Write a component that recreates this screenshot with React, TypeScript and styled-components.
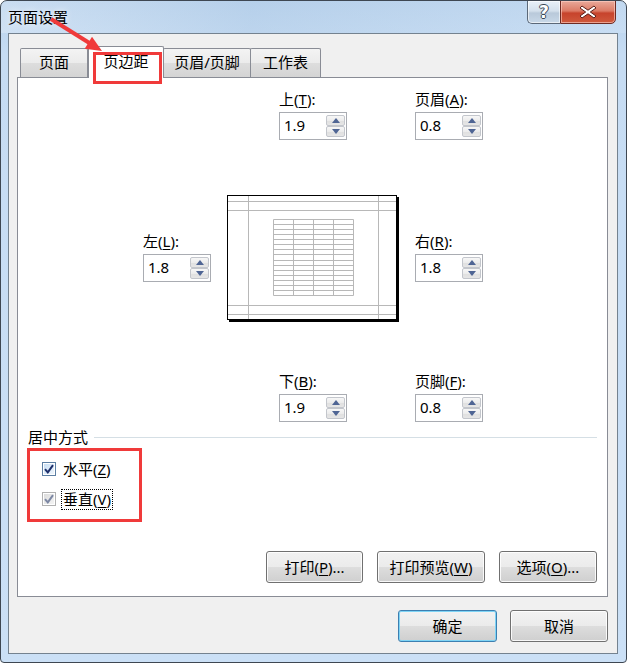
import React from 'react';
import styled, { createGlobalStyle, css } from 'styled-components';

const GlobalStyle = createGlobalStyle`
  html, body { margin: 0; padding: 0; background: #ffffff; }
  body { font-family: "Noto Sans", "Noto Sans CJK SC", sans-serif; color: #000; }
  * { box-sizing: border-box; }
`;

const FONT = `"Noto Sans", "Noto Sans CJK SC", sans-serif`;

const Window = styled.div`
  position: relative;
  width: 627px;
  height: 663px;
  display: flex;
  flex-direction: column;
  border: 1px solid #3e4752;
  border-radius: 7px 7px 4px 4px;
  overflow: hidden;
  background: linear-gradient(180deg, #b7d1ec 0%, #c6dcf3 8%, #cbe0f6 100%);
  font-family: ${FONT};
`;

const TitleBar = styled.div`
  height: 32px;
  display: flex;
  align-items: flex-start;
  padding-left: 7px;
  flex-shrink: 0;
  background: linear-gradient(90deg, rgba(255,255,255,0.25) 0%, rgba(180,205,230,0.3) 40%, rgba(220,235,250,0.3) 100%);
`;

const Title = styled.div`
  margin-top: 7px;
  font-size: 15px;
  line-height: 18px;
  color: #000;
  text-shadow: 0 0 6px rgba(255,255,255,0.9);
`;

const CaptionButtons = styled.div`
  margin-left: auto;
  margin-right: 10px;
  margin-top: -1px;
  display: flex;
`;

const CaptionButton = styled.div<{ $close?: boolean }>`
  height: 24px;
  display: flex;
  align-items: center;
  justify-content: center;
  border: 1px solid #5b6878;
  ${(p) =>
    p.$close
      ? css`
          width: 56px;
          border-radius: 0 0 5px 0;
          border-color: #6e2a22;
          background: linear-gradient(180deg, #e9a99a 0%, #dc7b66 45%, #c7432c 55%, #cf5a3d 100%);
          box-shadow: inset 0 0 0 1px rgba(255, 210, 200, 0.6);
        `
      : css`
          width: 33px;
          border-radius: 0 0 0 5px;
          border-right: none;
          background: linear-gradient(180deg, #e9f0f8 0%, #d4e0ec 45%, #b9c9da 55%, #c8d8e8 100%);
          box-shadow: inset 0 0 0 1px rgba(255, 255, 255, 0.6);
        `}
`;

const HelpGlyph = styled.span`
  font-family: "DejaVu Sans", sans-serif;
  font-weight: bold;
  font-size: 17px;
  line-height: 17px;
  color: #ffffff;
  text-shadow: 1px 0 0 #3a4756, -1px 0 0 #3a4756, 0 1px 0 #3a4756, 0 -1px 0 #3a4756;
`;

const Client = styled.div`
  flex: 1;
  margin: 0 8px 8px 7px;
  background: #f0f0f0;
  border: 1px solid #74828f;
  display: flex;
  flex-direction: column;
  padding-top: 12px;
`;

const TabStrip = styled.div`
  margin-left: 11px;
  height: 31px;
  display: flex;
  align-items: flex-end;
`;

const Tab = styled.div<{ $active?: boolean; $w: number }>`
  width: ${(p) => p.$w}px;
  display: flex;
  align-items: center;
  justify-content: center;
  font-size: 15px;
  line-height: 20px;
  border: 1px solid #898c95;
  border-bottom: none;
  border-radius: 2px 2px 0 0;
  ${(p) =>
    p.$active
      ? css`
          height: 32px;
          margin-bottom: -1px;
          background: #ffffff;
          position: relative;
          z-index: 1;
          padding-bottom: 4px;
        `
      : css`
          height: 29px;
          background: linear-gradient(180deg, #f3f3f3 0%, #ebebeb 50%, #dddddd 51%, #d4d4d4 100%);
          margin-left: -1px;
          &:first-child { margin-left: 0; }
          padding-bottom: 3px;
        `}
`;

const Panel = styled.div`
  margin-left: 8px;
  width: 591px;
  height: 520px;
  background: #ffffff;
  border: 1px solid #898c95;
  display: flex;
  flex-direction: column;
  padding: 11px 10px 13px 10px;
`;

const MarginGrid = styled.div`
  margin-left: 115px;
  display: grid;
  grid-template-columns: 68px 16px 172px 16px 68px;
  grid-template-rows: 51px 55px 127px 49px 51px;
`;

const Cell = styled.div<{ $row: number; $col: number; $center?: boolean; $lift?: boolean }>`
  grid-row: ${(p) => p.$row};
  grid-column: ${(p) => p.$col};
  justify-self: ${(p) => (p.$center ? 'center' : 'start')};
  align-self: center;
  margin-top: ${(p) => (p.$lift ? '-5px' : '0')};
`;

const SpinField = styled.div`
  display: flex;
  flex-direction: column;
  gap: 3px;
`;

const FieldLabel = styled.div`
  font-size: 15px;
  line-height: 20px;
  white-space: nowrap;
`;

const SpinBox = styled.div`
  width: 68px;
  height: 28px;
  border: 1px solid #a9acb2;
  background: #ffffff;
  display: flex;
  align-items: stretch;
  padding: 2px 1px 2px 4px;
`;

const SpinValue = styled.div`
  flex: 1;
  font-size: 15px;
  line-height: 21px;
`;

const SpinButtons = styled.div`
  width: 19px;
  display: flex;
  flex-direction: column;
`;

const SpinButton = styled.div`
  flex: 1;
  display: flex;
  align-items: center;
  justify-content: center;
  border: 1px solid #c3c6cc;
  border-radius: 2px;
  background: linear-gradient(180deg, #f7f7f7 0%, #ececec 50%, #dfdfdf 51%, #e6e6e6 100%);
`;

const Preview = styled.svg`
  display: block;
`;

const CenterSection = styled.div`
  margin-top: 5px;
  display: flex;
  flex-direction: column;
`;

const SectionHeader = styled.div`
  display: flex;
  align-items: center;
  height: 20px;
`;

const SectionTitle = styled.div`
  font-size: 15px;
  line-height: 20px;
`;

const Rule = styled.div`
  flex: 1;
  height: 1px;
  margin-left: 6px;
  background: #d5dfe5;
`;

const CheckList = styled.div`
  margin-top: 11px;
  margin-left: 14px;
  display: flex;
  flex-direction: column;
  gap: 8px;
`;

const CheckRow = styled.div`
  height: 22px;
  display: flex;
  align-items: center;
  gap: 5px;
`;

const CheckBox = styled.div<{ $muted?: boolean }>`
  width: 14px;
  height: 14px;
  border: 1px solid ${(p) => (p.$muted ? '#b1b1b1' : '#5c7fa3')};
  padding: 1px;
  background: #ffffff;
  display: flex;
`;

const CheckInner = styled.div<{ $muted?: boolean }>`
  flex: 1;
  display: flex;
  align-items: center;
  justify-content: center;
  background: ${(p) =>
    p.$muted
      ? 'linear-gradient(135deg, #dcdcdc 0%, #f4f4f4 100%)'
      : 'linear-gradient(135deg, #c9dff4 0%, #eef5fc 100%)'};
`;

const CheckLabel = styled.div<{ $focused?: boolean }>`
  font-size: 15px;
  line-height: 19px;
  padding: 0 1px;
  border: 1px dotted ${(p) => (p.$focused ? '#000' : 'transparent')};
`;

const PanelButtons = styled.div`
  margin-top: auto;
  display: flex;
  justify-content: flex-end;
  gap: 14px;
`;

const Button = styled.div<{ $w: number; $default?: boolean }>`
  width: ${(p) => p.$w}px;
  height: 32px;
  display: flex;
  align-items: center;
  justify-content: center;
  font-size: 15px;
  line-height: 20px;
  padding-bottom: 1px;
  border-radius: 3px;
  border: 1px solid ${(p) => (p.$default ? '#3c7fb1' : '#707070')};
  background: linear-gradient(180deg, #f2f2f2 0%, #ebebeb 50%, #dddddd 51%, #cfcfcf 100%);
  box-shadow: inset 0 0 0 1px ${(p) => (p.$default ? '#7fd4f5' : 'rgba(255,255,255,0.85)')};
`;

const Footer = styled.div`
  display: flex;
  justify-content: flex-end;
  gap: 13px;
  padding: 13px 9px 0 0;
`;

const Annotation = styled.div<{ $x: number; $y: number; $w: number; $h: number }>`
  position: absolute;
  left: ${(p) => p.$x}px;
  top: ${(p) => p.$y}px;
  width: ${(p) => p.$w}px;
  height: ${(p) => p.$h}px;
  border: 3px solid #f03a3a;
  pointer-events: none;
  z-index: 5;
`;

const ArrowSvg = styled.svg`
  position: absolute;
  left: 0;
  top: 0;
  pointer-events: none;
  z-index: 6;
`;

const U = styled.span`
  text-decoration: underline;
  text-underline-offset: 2px;
`;

const Tri = ({ up }: { up?: boolean }) => (
  <svg width="8" height="5" viewBox="0 0 8 5">
    <polygon points={up ? '0,5 8,5 4,0' : '0,0 8,0 4,5'} fill="#4f6594" />
  </svg>
);

const Spinner = ({ label, k, value }: { label: string; k: string; value: string }) => (
  <SpinField>
    <FieldLabel>
      {label}(<U>{k}</U>):
    </FieldLabel>
    <SpinBox>
      <SpinValue>{value}</SpinValue>
      <SpinButtons>
        <SpinButton>
          <Tri up />
        </SpinButton>
        <SpinButton>
          <Tri />
        </SpinButton>
      </SpinButtons>
    </SpinBox>
  </SpinField>
);

const PagePreview = () => {
  const rows = 15;
  const tx = 46, ty = 24, tw = 80, th = 76;
  const rowLines = Array.from({ length: rows + 1 }, (_, i) => ty + Math.round((th * i) / rows) + 0.5);
  const colLines = [0, 1, 2, 3, 4].map((i) => tx + i * 20 + 0.5);
  return (
    <Preview width="172" height="127" viewBox="0 0 172 127">
      <rect x="2" y="2" width="170" height="125" fill="#000" />
      <rect x="0.5" y="0.5" width="169" height="124" fill="#fff" stroke="#000" />
      <g stroke="#b8b8b8" strokeWidth="1">
        <line x1="21.5" y1="1" x2="21.5" y2="124" />
        <line x1="151.5" y1="1" x2="151.5" y2="124" />
        <line x1="1" y1="6.5" x2="169" y2="6.5" />
        <line x1="1" y1="15.5" x2="169" y2="15.5" />
        <line x1="1" y1="110.5" x2="169" y2="110.5" />
        <line x1="1" y1="119.5" x2="169" y2="119.5" />
        {rowLines.map((y, i) => (
          <line key={'r' + i} x1={tx + 0.5} y1={y} x2={tx + tw + 0.5} y2={y} />
        ))}
        {colLines.map((x, i) => (
          <line key={'c' + i} x1={x} y1={ty + 0.5} x2={x} y2={ty + th + 0.5} />
        ))}
      </g>
    </Preview>
  );
};

const Check = ({ muted }: { muted?: boolean }) => (
  <CheckBox $muted={muted}>
    <CheckInner $muted={muted}>
      <svg width="10" height="10" viewBox="0 0 10 10">
        <path d="M1 5.2 L3.8 8.3 L9 1.2" fill="none" stroke={muted ? '#7c87a3' : '#1d2f6b'} strokeWidth="2" />
      </svg>
    </CheckInner>
  </CheckBox>
);

export default function App() {
  return (
    <>
      <GlobalStyle />
      <Window>
        <TitleBar>
          <Title>页面设置</Title>
          <CaptionButtons>
            <CaptionButton>
              <HelpGlyph>?</HelpGlyph>
            </CaptionButton>
            <CaptionButton $close>
              <svg width="18" height="14" viewBox="0 0 18 14">
                <path
                  d="M3 1 L9 5.2 L15 1 L17 3 L11.3 7 L17 11 L15 13 L9 8.8 L3 13 L1 11 L6.7 7 L1 3 Z"
                  fill="#ffffff"
                  stroke="#5a1f18"
                  strokeWidth="1"
                  strokeLinejoin="round"
                />
              </svg>
            </CaptionButton>
          </CaptionButtons>
        </TitleBar>
        <Client>
          <TabStrip>
            <Tab $w={68}>页面</Tab>
            <Tab $w={76} $active>
              页边距
            </Tab>
            <Tab $w={88}>页眉/页脚</Tab>
            <Tab $w={71}>工作表</Tab>
          </TabStrip>
          <Panel>
            <MarginGrid>
              <Cell $row={1} $col={3} $center>
                <Spinner label="上" k="T" value="1.9" />
              </Cell>
              <Cell $row={1} $col={5}>
                <Spinner label="页眉" k="A" value="0.8" />
              </Cell>
              <Cell $row={3} $col={1} $lift>
                <Spinner label="左" k="L" value="1.8" />
              </Cell>
              <Cell $row={3} $col={3}>
                <PagePreview />
              </Cell>
              <Cell $row={3} $col={5} $lift>
                <Spinner label="右" k="R" value="1.8" />
              </Cell>
              <Cell $row={5} $col={3} $center>
                <Spinner label="下" k="B" value="1.9" />
              </Cell>
              <Cell $row={5} $col={5}>
                <Spinner label="页脚" k="F" value="0.8" />
              </Cell>
            </MarginGrid>
            <CenterSection>
              <SectionHeader>
                <SectionTitle>居中方式</SectionTitle>
                <Rule />
              </SectionHeader>
              <CheckList>
                <CheckRow>
                  <Check />
                  <CheckLabel>
                    水平(<U>Z</U>)
                  </CheckLabel>
                </CheckRow>
                <CheckRow>
                  <Check muted />
                  <CheckLabel $focused>
                    垂直(<U>V</U>)
                  </CheckLabel>
                </CheckRow>
              </CheckList>
            </CenterSection>
            <PanelButtons>
              <Button $w={97}>
                打印(<U>P</U>)...
              </Button>
              <Button $w={108}>
                打印预览(<U>W</U>)
              </Button>
              <Button $w={98}>
                选项(<U>O</U>)...
              </Button>
            </PanelButtons>
          </Panel>
          <Footer>
            <Button $w={99} $default>
              确定
            </Button>
            <Button $w={98}>取消</Button>
          </Footer>
        </Client>
        <Annotation $x={92} $y={51} $w={69} $h={32} />
        <Annotation $x={26} $y={447} $w={115} $h={74} />
        <ArrowSvg width="120" height="70" viewBox="0 0 120 70">
          <line x1="50" y1="18" x2="90" y2="43" stroke="#f03a3a" strokeWidth="4" />
          <polygon points="101,50 83.7,47.7 91,35.7" fill="#f03a3a" />
        </ArrowSvg>
      </Window>
    </>
  );
}
